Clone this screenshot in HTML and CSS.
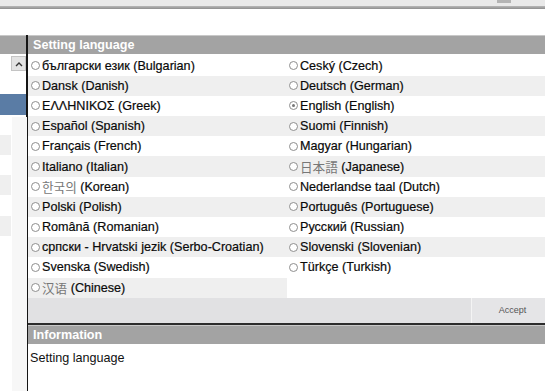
FILE: index.html
```html
<!DOCTYPE html>
<html lang="en">
<head>
  <meta charset="UTF-8">
  <title>Setting language</title>
  <link rel="stylesheet" href="styles.css">
</head>
<body>

<div class="top-strip"><div class="top-mark"></div></div>
<div class="top-line"></div>
<div class="top-space"></div>

<div class="main">
  <div class="side">
    <div class="head"></div>
    <div class="side-list">
      <div class="side-row"></div>
      <div class="side-row"></div>
      <div class="side-row selected"></div>
      <div class="side-row"></div>
      <div class="side-row alt"></div>
      <div class="side-row"></div>
      <div class="side-row alt"></div>
      <div class="side-row"></div>
      <div class="side-row alt"></div>
    </div>
    <div class="side-track"></div>
    <div class="side-up">
      <svg width="8" height="6" viewBox="0 0 8 6"><path d="M1 5 L4 2 L7 5" fill="none" stroke="#333" stroke-width="1.4"/></svg>
    </div>
  </div>

  <div class="content">
    <div class="head">Setting language</div>

    <div class="lang-grid">
      <label class="cell"><span class="radio"></span>български език (Bulgarian)</label>
      <label class="cell"><span class="radio"></span>Dansk (Danish)</label>
      <label class="cell"><span class="radio"></span>ΕΛΛΗΝΙΚΟΣ (Greek)</label>
      <label class="cell"><span class="radio"></span>Español (Spanish)</label>
      <label class="cell"><span class="radio"></span>Français (French)</label>
      <label class="cell"><span class="radio"></span>Italiano (Italian)</label>
      <label class="cell"><span class="radio"></span><span class="cjk kr">한국의</span>&nbsp;(Korean)</label>
      <label class="cell"><span class="radio"></span>Polski (Polish)</label>
      <label class="cell"><span class="radio"></span>Română (Romanian)</label>
      <label class="cell"><span class="radio"></span>српски - Hrvatski jezik (Serbo-Croatian)</label>
      <label class="cell"><span class="radio"></span>Svenska (Swedish)</label>
      <label class="cell"><span class="radio"></span><span class="cjk sc">汉语</span>&nbsp;(Chinese)</label>

      <label class="cell"><span class="radio"></span>Ceský (Czech)</label>
      <label class="cell"><span class="radio"></span>Deutsch (German)</label>
      <label class="cell"><span class="radio checked"></span>English (English)</label>
      <label class="cell"><span class="radio"></span>Suomi (Finnish)</label>
      <label class="cell"><span class="radio"></span>Magyar (Hungarian)</label>
      <label class="cell"><span class="radio"></span><span class="cjk jp">日本語</span>&nbsp;(Japanese)</label>
      <label class="cell"><span class="radio"></span>Nederlandse taal (Dutch)</label>
      <label class="cell"><span class="radio"></span>Português (Portuguese)</label>
      <label class="cell"><span class="radio"></span>Русский (Russian)</label>
      <label class="cell"><span class="radio"></span>Slovenski (Slovenian)</label>
      <label class="cell"><span class="radio"></span>Türkçe (Turkish)</label>
      <div class="cell empty"></div>
    </div>

    <div class="action-bar">
      <div class="accept">Accept</div>
    </div>

    <div class="head">Information</div>
    <div class="info-text">Setting language</div>
  </div>
</div>

</body>
</html>
```

FILE: styles.css
```css
html, body {
  margin: 0;
  padding: 0;
}

body {
  width: 545px;
  height: 391px;
  overflow: hidden;
  background: #fff;
  color: #000;
  font-family: 'Liberation Sans', Arial, sans-serif;
  font-size: 12.6px;
}

.top-strip {
  height: 6px;
  background: #e9e9e9;
  display: flex;
  justify-content: flex-end;
}

.top-mark {
  width: 14px;
  height: 3px;
  background: #b4b4b4;
  margin-right: 34px;
}

.top-line {
  height: 3px;
  background: linear-gradient(#b8b8b8, #8e8e8e);
}

.top-space {
  height: 26px;
}

.main {
  display: flex;
  height: 356px;
}

.head {
  height: 18px;
  line-height: 19px;
  border-top: 1px solid #c8c8c8;
  background: #a3a3a3;
  color: #fff;
  font-weight: bold;
  padding-left: 5px;
}

/* left list, mostly hidden */
.side {
  position: relative;
  width: 26px;
  border-right: 2px solid #151515;
}

.side .head {
  padding-left: 0;
}

.side-row {
  height: 20.2px;
}

.side-row.selected {
  background: #5a7ca5;
}

.side-row.alt {
  background: #efefef;
}

.side-track {
  position: absolute;
  left: 11px;
  top: 82px;
  bottom: 0;
  width: 15px;
  background: #f7f7f7;
  border-left: 1px solid #fff;
}

.side-up {
  position: absolute;
  left: 11px;
  top: 21px;
  width: 13px;
  height: 13px;
  background: #e3e3e3;
  border: 1px solid #c4c4c4;
  display: flex;
  align-items: center;
  justify-content: center;
}

.content {
  flex: 1;
  display: flex;
  flex-direction: column;
}

.lang-grid {
  display: grid;
  grid-auto-flow: column;
  grid-template-rows: repeat(12, 20.2px);
  grid-template-columns: 259px 1fr;
  padding-top: 1.5px;
}

.cell {
  display: flex;
  align-items: center;
  padding-left: 3px;
  white-space: nowrap;
  color: #0a0a0a;
  -webkit-text-stroke: 0.2px #0a0a0a;
}

.cell:nth-child(n+13) {
  padding-left: 2px;
}

.cell:nth-child(even) {
  background: #efefef;
}

.cell.empty {
  background: #fff;
}

.radio {
  position: relative;
  width: 7px;
  height: 7px;
  border: 1px solid #8e8e8e;
  border-radius: 50%;
  background: #fff;
  margin-right: 2px;
  flex-shrink: 0;
}

.radio.checked::after {
  content: '';
  position: absolute;
  left: 2px;
  top: 2px;
  width: 3px;
  height: 3px;
  border-radius: 50%;
  background: #777;
}

.cjk {
  color: #777;
  -webkit-text-stroke: 0;
}

.cjk.kr { font-family: 'Noto Sans CJK KR', sans-serif; }
.cjk.sc { font-family: 'Noto Sans CJK SC', sans-serif; }
.cjk.jp { font-family: 'Noto Sans CJK JP', sans-serif; }

.action-bar {
  height: 25px;
  background: #e1e1e3;
  border-bottom: 2px solid #2c2c2c;
  display: flex;
  justify-content: flex-end;
}

.accept {
  width: 74px;
  border-left: 1px solid #f4f4f4;
  background: #e5e5e7;
  font-size: 9px;
  color: #555;
  display: flex;
  align-items: center;
  justify-content: center;
  padding-left: 8px;
  box-sizing: border-box;
}

.info-text {
  padding: 7px 0 0 2px;
  color: #111;
}
```
